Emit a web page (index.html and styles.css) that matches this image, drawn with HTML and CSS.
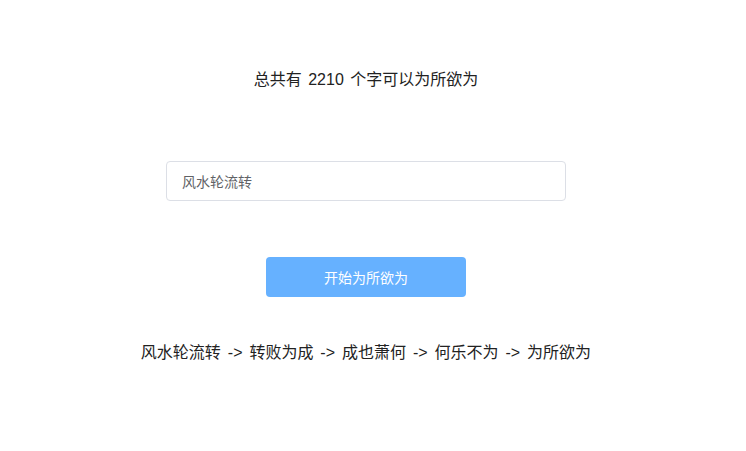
FILE: index.html
```html
<!DOCTYPE html>
<html>
<head>
  <meta charset="utf-8">
  <title>为所欲为</title>
  <link rel="stylesheet" href="styles.css">
</head>
<body>
  <div id="app">
    <div class="title">总共有 2210 个字可以为所欲为</div>
    <div class="input-wrap">
      <input class="input" type="text" value="风水轮流转">
    </div>
    <button class="btn">开始为所欲为</button>
    <div class="result">风水轮流转 -&gt; 转败为成 -&gt; 成也萧何 -&gt; 何乐不为 -&gt; 为所欲为</div>
  </div>
</body>
</html>
```

FILE: styles.css
```css
html, body {
  margin: 0;
  background-color: #fff;
  font-family: "Liberation Sans", "Noto Sans CJK SC", sans-serif;
}

#app {
  display: flex;
  flex-direction: column;
  align-items: center;
  padding-top: 68px;
  padding-right: 14px;
}

.title {
  font-size: 16px;
  line-height: 24px;
  word-spacing: 2px;
  color: #222;
}

.input-wrap {
  margin-top: 69px;
  width: 400px;
}

.input {
  box-sizing: border-box;
  width: 100%;
  height: 40px;
  padding: 0 15px;
  border: 1px solid #dcdfe6;
  border-radius: 4px;
  font-family: inherit;
  font-size: 14px;
  color: #606266;
  outline: none;
}

.btn {
  margin-top: 56px;
  width: 200px;
  height: 40px;
  border: none;
  border-radius: 4px;
  background-color: #66b1ff;
  color: #fff;
  font-family: inherit;
  font-size: 14px;
}

.result {
  margin-top: 44px;
  font-size: 16px;
  line-height: 24px;
  word-spacing: 2.5px;
  color: #222;
}
```
